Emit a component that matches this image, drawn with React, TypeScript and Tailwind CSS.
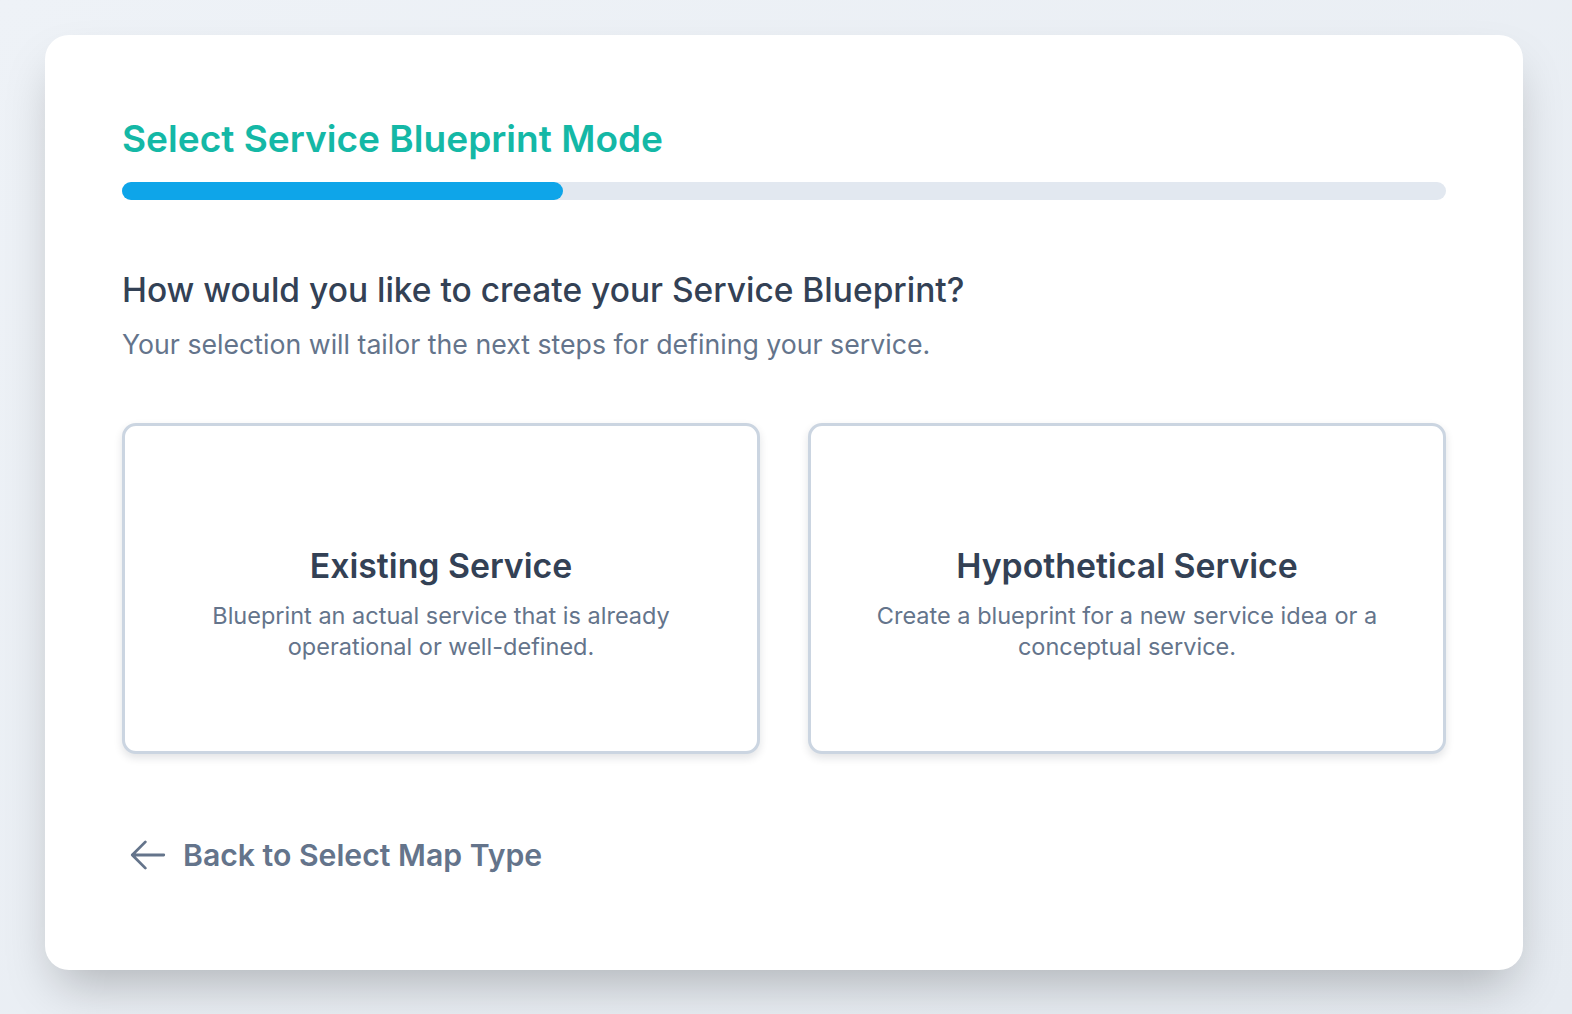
const modes = [
  {
    id: "existing",
    title: "Existing Service",
    description: "Blueprint an actual service that is already operational or well-defined.",
  },
  {
    id: "hypothetical",
    title: "Hypothetical Service",
    description: "Create a blueprint for a new service idea or a conceptual service.",
  },
];

function ArrowLeftIcon({ className }: { className?: string }) {
  return (
    <svg viewBox="0 0 24 24" fill="none" stroke="currentColor" strokeWidth={1.6} className={className}>
      <path strokeLinecap="round" strokeLinejoin="round" d="M10.5 19.5 3 12m0 0 7.5-7.5M3 12h18" />
    </svg>
  );
}

export default function App() {
  const progress = 33.3;

  return (
    <div
      className="min-h-screen w-full bg-gradient-to-br from-[#eef2f7] to-[#e6ebf1] pl-[45px] pr-[49px] pt-[35px] pb-[45px]"
      style={{ fontFamily: "Inter, 'Noto Sans', sans-serif" }}
    >
      <div className="bg-white rounded-[24px] shadow-[0_25px_50px_-12px_rgba(0,0,0,0.25)] px-[77px] pt-[80px] pb-[94px]">
        {/* Header + progress */}
        <h1 className="text-[37.1px] leading-[48px] font-semibold text-[#14b8a6]">
          Select Service Blueprint Mode
        </h1>
        <div className="mt-[19px] h-[18px] w-full rounded-full bg-[#e2e8f0]">
          <div className="h-full rounded-full bg-[#0ea5e9]" style={{ width: `${progress}%` }} />
        </div>

        {/* Question */}
        <h2 className="mt-[70px] text-[33.5px] leading-[40px] font-medium text-[#334155]">
          How would you like to create your Service Blueprint?
        </h2>
        <p className="mt-[18px] text-[26.7px] leading-[32px] text-[#64748b]">
          Your selection will tailor the next steps for defining your service.
        </p>

        {/* Mode cards */}
        <div className="mt-[63px] grid grid-cols-2 gap-[48px]">
          {modes.map((mode) => (
            <button
              key={mode.id}
              className="h-[331px] flex flex-col items-center justify-center rounded-[14px] border-[3px] border-[#cbd5e1] bg-white shadow-[0_4px_8px_rgba(15,23,42,0.12)] px-8 pt-[31px] text-center"
            >
              <span className="text-[33.8px] leading-[40px] font-semibold text-[#334155]">{mode.title}</span>
              <span className="mt-[14px] max-w-[520px] text-[23.5px] leading-[31px] text-[#64748b]">
                {mode.description}
              </span>
            </button>
          ))}
        </div>

        {/* Back link */}
        <button className="mt-[80px] ml-[5px] flex items-center gap-[14px] text-[#64748b]">
          <ArrowLeftIcon className="h-[42px] w-[42px]" />
          <span className="text-[30.2px] leading-[40px] font-semibold">Back to Select Map Type</span>
        </button>
      </div>
    </div>
  );
}
